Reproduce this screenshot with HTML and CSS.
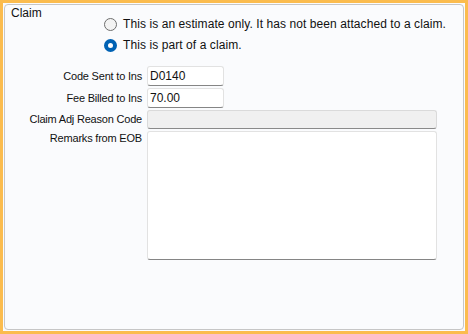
FILE: index.html
```html
<!DOCTYPE html>
<html>
<head>
<meta charset="utf-8">
<link rel="stylesheet" href="styles.css">
</head>
<body>
<div class="frame">
  <div class="group">
    <div class="title">Claim</div>
    <div class="radios">
      <div class="radio"><span class="circle"></span><span class="rtext">This is an estimate only. It has not been attached to a claim.</span></div>
      <div class="radio"><span class="circle checked"></span><span class="rtext">This is part of a claim.</span></div>
    </div>
    <div class="form">
      <span class="lbl">Code Sent to Ins</span>
      <div class="field short">D0140</div>
      <span class="lbl">Fee Billed to Ins</span>
      <div class="field short">70.00</div>
      <span class="lbl">Claim Adj Reason Code</span>
      <div class="field wide disabled"></div>
      <span class="lbl top">Remarks from EOB</span>
      <div class="field wide memo"></div>
    </div>
  </div>
</div>
</body>
</html>
```
FILE: styles.css
```css
html, body {
  margin: 0;
  padding: 0;
}
body {
  width: 468px;
  height: 334px;
  font-family: "Liberation Sans", Arial, sans-serif;
  color: #111;
}
.frame {
  box-sizing: border-box;
  width: 468px;
  height: 334px;
  border: 3px solid #fbbc4e;
  padding: 1px;
  background: #fafbfd;
}
.group {
  box-sizing: border-box;
  height: 100%;
  border: 1px solid #c6c6c6;
  border-radius: 4px;
  padding-top: 2px;
  background: #fafbfd;
}
.title {
  font-size: 12px;
  line-height: 12px;
  padding-left: 6px;
}
.radios {
  margin-top: -2px;
  padding-left: 99px;
  display: flex;
  flex-direction: column;
  gap: 6px;
}
.radio {
  display: flex;
  align-items: center;
  height: 15px;
  gap: 6px;
}
.circle {
  box-sizing: border-box;
  width: 13px;
  height: 13px;
  border-radius: 50%;
  border: 1px solid #6e6e6e;
  background: #f3f3f3;
  flex: none;
}
.circle.checked {
  border: 4px solid #0062b4;
  background: #ffffff;
}
.rtext {
  font-size: 12px;
  line-height: 15px;
  letter-spacing: 0.08px;
  white-space: nowrap;
}
.form {
  margin-top: 13px;
  display: grid;
  grid-template-columns: 137px auto;
  grid-template-rows: 20px 20px 19px 129px;
  column-gap: 5px;
  row-gap: 2px;
  justify-content: start;
}
.lbl {
  font-size: 11px;
  line-height: 13px;
  letter-spacing: -0.2px;
  text-align: right;
  align-self: center;
  white-space: nowrap;
}
.lbl.top {
  align-self: start;
  padding-top: 1px;
}
.field {
  box-sizing: border-box;
  border: 1px solid #e2e2e2;
  border-bottom-color: #858585;
  border-radius: 3px;
  background: #ffffff;
  font-size: 12px;
  line-height: 18px;
  padding-left: 2px;
}
.field.short {
  width: 77px;
}
.field.wide {
  width: 290px;
}
.field.disabled {
  background: #f0f0f0;
  border-color: #dadada;
  border-bottom-color: #8a8a8a;
}
```
